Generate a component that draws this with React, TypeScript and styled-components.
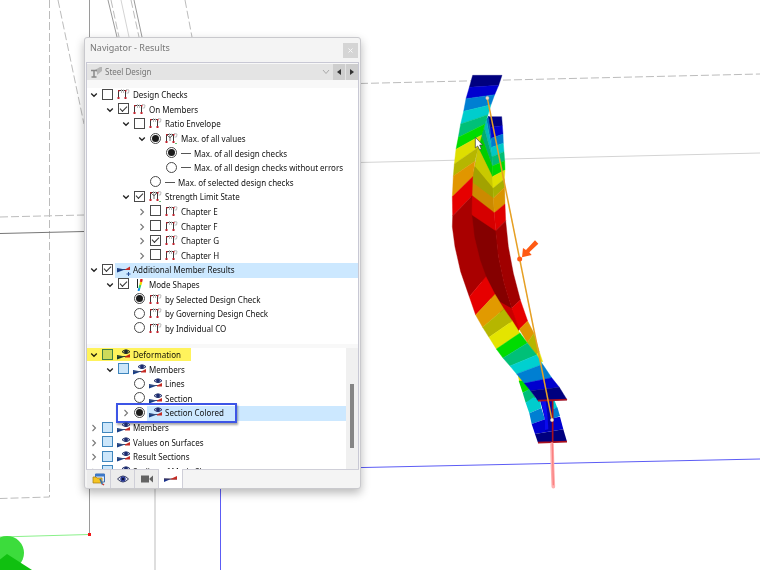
import React from "react";
import styled, { createGlobalStyle, css } from "styled-components";

const GlobalStyle = createGlobalStyle`
  *, *::before, *::after { box-sizing: border-box; }
  body {
    margin: 0;
    background: #fff;
    color: #111;
    font-family: "Noto Sans", "Open Sans", sans-serif;
    font-size: 8px;
  }
`;

const Workspace = styled.main`
  position: relative;
  min-height: 100vh;
  padding: 37px 0 0 84px;
  overflow: hidden;
`;

const Scene = styled.svg`
  position: absolute;
  inset: 0;
  width: 100%;
  height: 100%;
`;

const Panel = styled.section`
  position: relative;
  width: 277px;
  max-width: 100%;
  padding: 0 2px;
  background: #f4f4f4;
  border: 1px solid #c9c9cd;
  border-radius: 3px;
  box-shadow: 0 4px 10px rgba(0, 0, 0, 0.28);
`;

const TitleBar = styled.header`
  display: flex;
  align-items: center;
  justify-content: space-between;
  height: 24px;
  padding-left: 3px;
`;

const Title = styled.h1`
  margin: 0;
  padding-bottom: 4px;
  font-size: 9px;
  line-height: 14px;
  font-weight: 400;
  color: #777;
`;

const CloseButton = styled.button`
  display: grid;
  place-items: center;
  width: 15px;
  height: 15px;
  padding: 0;
  border: 0;
  background: #d5d5d5;
`;

const Body = styled.div`
  border: solid #c8c8d4;
  border-width: 1px 1px 0;
  margin: 0 -1px;
  background: #f8f8f8;
`;

const Picker = styled.div`
  display: flex;
  align-items: center;
  height: 16px;
  margin: 1px 0 8px;
  padding-left: 4px;
  background: #e4e4e4;
`;

const PickerField = styled.label`
  display: flex;
  flex: 1;
  align-items: center;
  gap: 3px;
`;

const PickerSelect = styled.select`
  flex: 1;
  appearance: none;
  padding: 0;
  border: 0;
  background: transparent;
  font: inherit;
  line-height: 14px;
  color: #777;
`;

const StepButton = styled.button`
  display: grid;
  place-items: center;
  width: 13px;
  height: 16px;
  padding: 0;
  border: 0;
  border-left: 1px solid #e4e4e4;
  background: #cecece;
`;

const UpperTree = styled.ul`
  display: grid;
  grid-auto-rows: 1fr;
  height: 256px;
  margin: 0;
  padding: 0 0 8px;
  list-style: none;
  background: #fff;
`;

const LowerPane = styled.div`
  display: flex;
  height: 121px;
  margin-top: 4px;
  overflow: hidden;
`;

const LowerTree = styled.ul`
  display: grid;
  flex: 1;
  grid-auto-rows: 1fr;
  height: 131px;
  margin: 0;
  padding: 0;
  list-style: none;
  background: #fff;
`;

const ScrollTrack = styled.div`
  width: 12px;
  padding: 36px 4px 0;
  background: #f0f0f0;
`;

const ScrollThumb = styled.div`
  height: 64px;
  background: #858585;
`;

const Row = styled.li<{ $level: number; $marked?: boolean; $framed?: boolean }>`
  position: relative;
  display: flex;
  align-items: center;
  padding-left: ${(p) => 2 + p.$level * 16}px;
  min-width: 0;
  min-height: 0;
  ${(p) =>
    p.$marked &&
    css`
      &::after {
        content: "";
        position: absolute;
        inset: 0 auto 2px 0;
        width: 104px;
        background: #fff35c;
        mix-blend-mode: multiply;
      }
    `}
  ${(p) =>
    p.$framed &&
    css`
      &::after {
        content: "";
        position: absolute;
        top: -3px;
        left: 29px;
        width: 121px;
        height: 20px;
        border: 2px solid #3d55e6;
        box-shadow: 1px 2px 2px rgba(0, 0, 0, 0.35);
      }
    `}
`;

const Twist = styled.button`
  display: grid;
  place-items: center;
  width: 9px;
  height: 11px;
  margin-right: 4px;
  padding: 0;
  border: 0;
  background: transparent;
`;

const TwistSpacer = styled.span`
  width: 13px;
`;

const Choice = styled.label<{ $selected?: boolean }>`
  display: flex;
  flex: 1;
  align-items: center;
  align-self: stretch;
  min-width: 0;
  white-space: nowrap;
  line-height: 14px;
  ${(p) =>
    p.$selected &&
    css`
      background: linear-gradient(to right, transparent 13px, #cce8ff 13px);
    `}
`;

const Check = styled.input<{ $blue?: boolean }>`
  appearance: none;
  display: grid;
  place-items: center;
  flex: none;
  width: 11px;
  height: 11px;
  margin: 0 4px 2px 0;
  border: 1px solid ${(p) => (p.$blue ? "#3f86bd" : "#4a4a4a")};
  background: ${(p) => (p.$blue ? "#cce6fa" : "#fff")};
  &:checked::before {
    content: "";
    width: 7px;
    height: 4px;
    margin-bottom: 2px;
    border: solid #333;
    border-width: 0 0 1px 1px;
    transform: rotate(-45deg);
  }
`;

const Radio = styled.input`
  appearance: none;
  display: grid;
  place-items: center;
  flex: none;
  width: 11px;
  height: 11px;
  margin: 0 4px 2px 0;
  border: 1px solid #4a4a4a;
  border-radius: 50%;
  background: #fff;
  &:checked::before {
    content: "";
    width: 7px;
    height: 7px;
    border-radius: 50%;
    background: #1c1c1c;
  }
`;

const Glyph = styled.svg`
  flex: none;
  margin-right: 2px;
`;

const Tabs = styled.nav`
  display: flex;
  height: 19px;
  margin: 0 -1px;
  padding-left: 1px;
  border-top: 1px solid #cfcfd8;
`;

const Tab = styled.button<{ $active?: boolean }>`
  display: grid;
  place-items: center;
  width: 24px;
  padding: 0;
  border: 0;
  border-right: 1px solid #cfcfd8;
  background: ${(p) => (p.$active ? "#fff" : "#ececec")};
  margin-top: ${(p) => (p.$active ? "-1px" : "0")};
`;

type IconName = "frame" | "frameM" | "line" | "addon" | "mode" | "eye";

const TreeIcon = ({ name }: { name: IconName }) => {
  if (name === "line")
    return (
      <Glyph width="11" height="12" viewBox="0 0 11 12" aria-hidden>
        <path d="M0 5.5h10" stroke="#555" />
      </Glyph>
    );
  if (name === "mode")
    return (
      <Glyph width="14" height="12" viewBox="0 0 14 12" aria-hidden>
        <path d="M4.500 0v9" stroke="#222" />
        <path d="M8.600 0L8 3" stroke="#e02020" strokeWidth="2.400" />
        <path d="M8.100 3L7.400 6" stroke="#f0d800" strokeWidth="2.200" />
        <path d="M7.300 6L6.400 9" stroke="#30d060" strokeWidth="2" />
        <path d="M6.400 9L5.500 12" stroke="#1090e0" strokeWidth="2" />
      </Glyph>
    );
  if (name === "addon")
    return (
      <Glyph width="14" height="12" viewBox="0 0 14 12" aria-hidden>
        <path d="M0 4L8 5.500L0 8.500Z" fill="#173d86" />
        <path d="M0 5.500H13" stroke="#27447c" />
        <path d="M8 5.500L13 2.500V6H8Z" fill="#c52c25" />
        <path d="M11.500 8v4M9.500 10h4" stroke="#244f99" />
      </Glyph>
    );
  if (name === "eye")
    return (
      <Glyph width="14" height="12" viewBox="0 0 14 12" aria-hidden>
        <path d="M0 6L8 7.500L0 10.500Z" fill="#173d86" />
        <path d="M0 7.500H13" stroke="#364b78" />
        <path d="M8 7.500L13 5V8.500H8Z" fill="#c52c25" />
        <path d="M5 2.700Q9 -1 13 2.700Q9 6.400 5 2.700Z" fill="#cfd5ee" stroke="#263469" />
        <circle cx="9" cy="2.700" r="1.900" fill="#1c2b70" />
      </Glyph>
    );
  return (
    <Glyph width="14" height="12" viewBox="0 0 14 12" aria-hidden>
      <path d="M1.500 9V1.500H8.500V9" fill="none" stroke="#3d3838" />
      <path d="M4.500 0V4M6.500 0.500V4M9 0.500L12 1L11.500 4L9.500 4" fill="none" stroke="#bdbdbd" />
      {name === "frameM" && <path d="M1.500 1.500L5 5L8.500 1.500M5 3V8" fill="none" stroke="#777" />}
      <path
        d="M1 1h1.500v1.500h-1.500ZM8 1h1.500v1.500h-1.500ZM0.500 8h2v2h-2ZM7.500 8h2v2h-2Z"
        fill="#c2202c"
      />
      {name === "frameM" && <path d="M10 10.500h2" stroke="#6cc47a" />}
    </Glyph>
  );
};

type Item = {
  label: string;
  level: number;
  twist?: "open" | "closed";
  kind: "check" | "radio";
  group?: string;
  on?: boolean;
  blue?: boolean;
  icon: IconName;
  selected?: boolean;
  marked?: boolean;
  framed?: boolean;
};

const upper: Item[] = [
  { label: "Design Checks", level: 0, twist: "open", kind: "check", icon: "frame" },
  { label: "On Members", level: 1, twist: "open", kind: "check", on: true, icon: "frame" },
  { label: "Ratio Envelope", level: 2, twist: "open", kind: "check", icon: "frame" },
  { label: "Max. of all values", level: 3, twist: "open", kind: "radio", group: "envelope", on: true, icon: "frameM" },
  { label: "Max. of all design checks", level: 4, kind: "radio", group: "all", on: true, icon: "line" },
  { label: "Max. of all design checks without errors", level: 4, kind: "radio", group: "all", icon: "line" },
  { label: "Max. of selected design checks", level: 3, kind: "radio", group: "envelope", icon: "line" },
  { label: "Strength Limit State", level: 2, twist: "open", kind: "check", on: true, icon: "frameM" },
  { label: "Chapter E", level: 3, twist: "closed", kind: "check", icon: "frame" },
  { label: "Chapter F", level: 3, twist: "closed", kind: "check", icon: "frame" },
  { label: "Chapter G", level: 3, twist: "closed", kind: "check", on: true, icon: "frame" },
  { label: "Chapter H", level: 3, twist: "closed", kind: "check", icon: "frame" },
  { label: "Additional Member Results", level: 0, twist: "open", kind: "check", on: true, icon: "addon", selected: true },
  { label: "Mode Shapes", level: 1, twist: "open", kind: "check", on: true, icon: "mode" },
  { label: "by Selected Design Check", level: 2, kind: "radio", group: "mode", on: true, icon: "frame" },
  { label: "by Governing Design Check", level: 2, kind: "radio", group: "mode", icon: "frame" },
  { label: "by Individual CO", level: 2, kind: "radio", group: "mode", icon: "frame" },
];

const lower: Item[] = [
  { label: "Deformation", level: 0, twist: "open", kind: "check", blue: true, icon: "eye", marked: true },
  { label: "Members", level: 1, twist: "open", kind: "check", blue: true, icon: "eye" },
  { label: "Lines", level: 2, kind: "radio", group: "deformation", icon: "eye" },
  { label: "Section", level: 2, kind: "radio", group: "deformation", icon: "eye" },
  { label: "Section Colored", level: 2, twist: "closed", kind: "radio", group: "deformation", on: true, icon: "eye", selected: true, framed: true },
  { label: "Members", level: 0, twist: "closed", kind: "check", blue: true, icon: "eye" },
  { label: "Values on Surfaces", level: 0, twist: "closed", kind: "check", blue: true, icon: "eye" },
  { label: "Result Sections", level: 0, twist: "closed", kind: "check", blue: true, icon: "eye" },
  { label: "Scaling of Mode Shapes", level: 0, twist: "closed", kind: "check", blue: true, icon: "eye" },
];

const TreeRow = ({ item }: { item: Item }) => (
  <Row $level={item.level} $marked={item.marked} $framed={item.framed}>
    {item.twist ? (
      <Twist aria-label={`${item.twist === "open" ? "Collapse" : "Expand"} ${item.label}`}>
        <svg width="8" height="8" viewBox="0 0 8 8" fill="none">
          {item.twist === "open" ? (
            <path d="M1.200 2.500L4 5.300L6.800 2.500" stroke="#222" strokeWidth="1.300" />
          ) : (
            <path d="M2.500 1L5.500 4L2.500 7" stroke="#777" strokeWidth="1.100" />
          )}
        </svg>
      </Twist>
    ) : (
      <TwistSpacer />
    )}
    <Choice $selected={item.selected}>
      {item.kind === "check" ? (
        <Check type="checkbox" defaultChecked={item.on} $blue={item.blue} />
      ) : (
        <Radio type="radio" name={item.group} defaultChecked={item.on} />
      )}
      <TreeIcon name={item.icon} />
      {item.label}
    </Choice>
  </Row>
);

/* Each entry is one band boundary across a strip: near x, y, far x, y. */
const frontEdges: number[][] = [
  [128, 46, 216, 46], [118, 82, 206, 76], [108, 116, 194, 104], [101, 154, 183, 134],
  [92, 192, 174, 164], [85, 232, 165, 192], [78, 268, 155, 225], [73, 312, 145, 262],
  [70, 348, 135, 304], [67, 410, 128, 350], [68, 468, 126, 408], [118, 710, 168, 650],
  [137, 765, 195, 703], [158, 802, 222, 747], [177, 832, 247, 783], [199, 867, 270, 819],
  [219, 894, 292, 849], [240, 918, 320, 885], [260, 942, 338, 913], [283, 970, 365, 953],
  [302, 992, 388, 982], [324, 1022, 411, 1019],
];
const frontColors = [
  "#00007f", "#0000cf", "#007fd2", "#00cdcd", "#00c078", "#00dc00", "#dede00", "#b6b600",
  "#e19600", "#e60000", "#a90000", "#e60000", "#e19a00", "#b6b600", "#e4e400", "#00dc00",
  "#00c078", "#00d0d0", "#007fd2", "#0000cf", "#00007f",
];
const frontBulge =
  "M68 468L67 500L75 560L92 635L118 710L168 650L150 600L133 530L125 460L126 408Z";

const flangeEdges: number[][] = [
  [176, 170, 215, 170], [182, 202, 217, 197], [184, 235, 219, 222], [185, 262, 220, 250],
  [186, 290, 222, 275], [187, 318, 224, 302], [187, 350, 225, 330], [189, 385, 223, 357],
  [190, 415, 224, 382], [193, 458, 225, 432], [197, 512, 227, 482], [245, 745, 271, 720],
  [268, 808, 293, 783], [292, 848, 312, 820], [318, 885, 328, 875], [330, 905, 338, 905],
];
const flangeColors = [
  "#000083", "#0000cf", "#007bcd", "#00c8c8", "#00bd75", "#00d900", "#e0e000", "#a8b000",
  "#d99400", "#e00000", "#a00000", "#e60000", "#e19600", "#b6b600", "#e4e400",
];
const flangeBulge = "M197 512L205 590L222 670L245 745L271 720L250 640L235 560L227 482Z";

const webEdges: number[][] = [
  [176, 168, 182, 202], [175, 170, 184, 235], [169, 178, 185, 262], [162, 200, 186, 290],
  [153, 225, 187, 318], [144, 262, 187, 350], [135, 320, 189, 385], [128, 368, 190, 415],
  [124, 405, 193, 458], [122, 462, 197, 512],
];
const webColors = [
  "#0000b8", "#0072bd", "#00b9bd", "#00ae70", "#00cd00", "#c9c900", "#a2a200", "#cc8a00", "#d60000",
];

type StripProps = { edges: number[][]; colors: string[]; bulge?: string };

const Strip = ({ edges, colors, bulge }: StripProps) => (
  <>
    {colors.map((color, i) => {
      const [a, b, c, d] = edges[i];
      const [e, f, g, h] = edges[i + 1];
      const path = bulge && i === 10 ? bulge : `M${a} ${b}L${e} ${f}L${g} ${h}L${c} ${d}Z`;
      return <path key={i} d={path} fill={color} stroke={color} strokeWidth="1.200" />;
    })}
  </>
);

const Beam = () => (
  <g transform="translate(430 60) scale(0.33333)">
    <path d="M262 940L268 965L290 975L275 945Z" fill="#e4e400" />
    <path d="M266 962L278 998L300 988L283 962Z" fill="#00dc00" />
    <path d="M278 998L287 1028L318 1015L300 986Z" fill="#00c078" />
    <path d="M287 1028L298 1060L334 1044L330 1020L310 1012Z" fill="#00cdcd" />
    <path d="M298 1060L305 1092L345 1078L334 1044Z" fill="#007fd2" />
    <path d="M305 1092L315 1122L400 1108L390 1070L345 1078Z" fill="#0000cf" />
    <path d="M315 1122L324 1148L411 1145L400 1108Z" fill="#00007f" />
    <path d="M330 1020H368V1112L345 1114L345 1078Z" fill="#0000ac" />
    <path d="M333 1022L347 1022L352 1060L355 1108L345 1110L345 1078Z" fill="#0a0aee" />
    <path d="M368 1022H374L382 1043L368 1048Z" fill="#00cdcd" />
    <path d="M368 1048L382 1042L390 1068L368 1076Z" fill="#007fd2" />
    <path d="M126 350L155 225L187 318L190 460L122 462Z" fill="#b39a00" />
    <path d="M120 445L115 530L140 640L200 747L262 815L270 800L246 745L223 670L206 590L198 510Z" fill="#850000" />
    <path d="M210 725L245 745L270 808L262 816Z" fill="#c90000" />
    <Strip edges={webEdges} colors={webColors} />
    <Strip edges={flangeEdges} colors={flangeColors} bulge={flangeBulge} />
    <Strip edges={frontEdges} colors={frontColors} bulge={frontBulge} />
    <path d="M324 1022L411 1019M368 1020V1146M324 1148L411 1145" stroke="#a8101e" strokeWidth="5" />
    <path d="M172 114L366 1080" stroke="#e6a024" strokeWidth="4.500" />
    <circle cx="172" cy="114" r="5" fill="#f3dcc4" stroke="#c9b8a8" />
    <circle cx="366" cy="1080" r="5" fill="#fff0d0" stroke="#d0c0b0" />
    <path d="M366 1152Q367 1220 370 1280" fill="none" stroke="#ffb0b0" strokeWidth="11" strokeLinecap="round" />
    <path d="M367 1150L370 1276" stroke="#fa8080" strokeWidth="4" />
    <circle cx="269" cy="597" r="7.500" fill="#ff5a14" />
    <path d="M315 541L325 551L298 577L305 585L276 592L279 564L288 570Z" fill="#ff5a14" />
    <path
      d="M136 232V264L143 258L149 270L154 267L149 255H158Z"
      fill="#fff"
      stroke="#333"
      strokeWidth="2"
    />
  </g>
);

const Backdrop = () => (
  <Scene viewBox="0 0 760 570" preserveAspectRatio="xMinYMin slice" role="img" aria-label="Deformed steel member">
    <g fill="none" stroke="#bcbcbc" strokeDasharray="8 3">
      <path d="M49.500 0V497L0 498.500" />
      <path d="M58 0L84 124" />
      <path d="M0 217L84 215" />
      <path d="M111 0L119 37M131 0L139 37M185 0L192 37" />
      <path d="M360 83.500L760 74" />
    </g>
    <g fill="none" stroke="#9a9a9a">
      <path d="M89.500 0V534" />
      <path d="M108 0L117 37M134 0L142 37" />
      <path d="M0 233.500L84 231.500" stroke="#777" />
    </g>
    <g fill="none" stroke="#d4d4d4">
      <path d="M121 0L129 37" />
      <path d="M360 162.500L760 153" />
      <path d="M155 480V570" strokeWidth="2" stroke="#dedede" />
    </g>
    <path d="M220.500 480V570M340 468L760 459" stroke="#5c5cf5" fill="none" />
    <path d="M0 537L89 534.500" stroke="#8af08a" />
    <rect x="88" y="533" width="3" height="3" fill="#f01818" />
    <circle cx="7" cy="553" r="17" fill="#3cdc3c" />
    <path d="M-8 566L7 554L32 570H-8Z" fill="#10c010" />
    <Beam />
  </Scene>
);

export default function App() {
  return (
    <>
      <GlobalStyle />
      <Workspace>
        <Backdrop />
        <Panel aria-label="Navigator">
          <TitleBar>
            <Title>Navigator - Results</Title>
            <CloseButton aria-label="Close">
              <svg width="5" height="5" viewBox="0 0 5 5">
                <path d="M0.500 0.500L4.500 4.500M4.500 0.500L0.500 4.500" stroke="#f7f7f7" />
              </svg>
            </CloseButton>
          </TitleBar>
          <Body>
            <Picker>
              <PickerField>
                <svg width="11" height="11" viewBox="0 0 11 11" aria-hidden>
                  <path d="M4 3L9 0H11V4L6 8V5Z" fill="#b5b5b5" />
                  <path d="M0 3.500H6M3 4V10M0.500 10H5.500" stroke="#888" strokeWidth="1.500" />
                </svg>
                <PickerSelect aria-label="Result category" defaultValue="steel">
                  <option value="steel">Steel Design</option>
                </PickerSelect>
                <svg width="10" height="8" viewBox="0 0 10 8" fill="none" aria-hidden>
                  <path d="M1 2L4 5.500L7 2" stroke="#aaa" />
                </svg>
              </PickerField>
              <StepButton aria-label="Previous">
                <svg width="4" height="6" viewBox="0 0 4 6"><path d="M4 0V6L0 3Z" fill="#333" /></svg>
              </StepButton>
              <StepButton aria-label="Next">
                <svg width="4" height="6" viewBox="0 0 4 6"><path d="M0 0V6L4 3Z" fill="#333" /></svg>
              </StepButton>
            </Picker>
            <UpperTree>
              {upper.map((item) => (
                <TreeRow key={item.label} item={item} />
              ))}
            </UpperTree>
            <LowerPane>
              <LowerTree>
                {lower.map((item, i) => (
                  <TreeRow key={i} item={item} />
                ))}
              </LowerTree>
              <ScrollTrack>
                <ScrollThumb />
              </ScrollTrack>
            </LowerPane>
          </Body>
          <Tabs>
            <Tab aria-label="Data">
              <svg width="14" height="13" viewBox="0 0 14 13">
                <path d="M3.500 1h9v8h-9Z" fill="#dce9f8" stroke="#3a6fb5" />
                <path d="M3 1h10v2.500H3Z" fill="#3c78c8" />
                <path d="M1 4h3l1 1h5v5H1Z" fill="#f5c422" stroke="#a87d10" strokeWidth="0.700" />
                <path d="M8 6l2.500 5.500" stroke="#2f6bb0" strokeWidth="1.500" />
                <path d="M10.500 11l1.500 1" stroke="#d03a2a" strokeWidth="1.500" />
              </svg>
            </Tab>
            <Tab aria-label="Display">
              <svg width="12" height="8" viewBox="0 0 12 8">
                <path d="M0.500 4Q6 -2 11.500 4Q6 10 0.500 4Z" fill="#e6e8f4" stroke="#353b5c" />
                <circle cx="6" cy="4" r="2.700" fill="#2b3a93" />
                <circle cx="6" cy="4" r="1.100" fill="#080b25" />
              </svg>
            </Tab>
            <Tab aria-label="Views">
              <svg width="12" height="8" viewBox="0 0 12 8">
                <path d="M0 0.500h8v7H0ZM8.500 3.500L12 0.500v7L8.500 4.500Z" fill="#636363" />
              </svg>
            </Tab>
            <Tab $active aria-label="Results">
              <svg width="13" height="8" viewBox="0 0 13 8">
                <path d="M0 3.500L7 4L0 7Z" fill="#17308c" />
                <path d="M0 4H13" stroke="#4a3b55" />
                <path d="M6.500 4L13 1V4.500H6.500Z" fill="#c52c25" />
              </svg>
            </Tab>
          </Tabs>
        </Panel>
      </Workspace>
    </>
  );
}
